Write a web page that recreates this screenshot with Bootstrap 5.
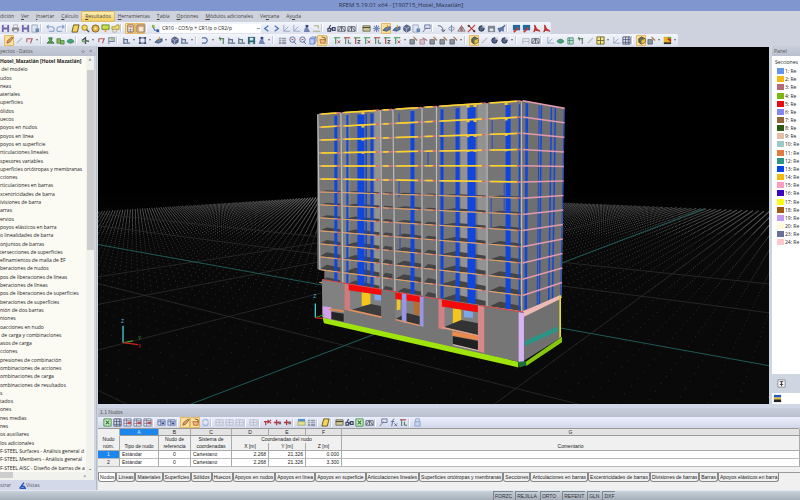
<!DOCTYPE html>
<html lang="es">
<head>
<meta charset="utf-8">
<meta name="viewport" content="width=device-width, initial-scale=1">
<title>RFEM 5.19.01 x64 - [190715_Hotel_Mazatlán]</title>
<link href="https://cdn.jsdelivr.net/npm/bootstrap@5.3.0/dist/css/bootstrap.min.css" rel="stylesheet">
<style>
:root{--ui:"Open Sans","Noto Sans",sans-serif;--grid-font:"Liberation Sans",Arial,sans-serif}
body{font:5px/8px var(--ui);color:#222;background:#cdd2de;overflow:hidden}
button,select{font:inherit;color:inherit;border:0;background:none;padding:0;margin:0}
.titlebar{height:11px;background:#8096cf;font-size:6px;line-height:11px;color:#2b3044;padding-left:2px}
.menubar{height:11px;background:#ced2dc}
.menubar a{color:#444;text-decoration:none;line-height:9px;padding:0 3px;margin-right:-1px;border:1px solid transparent;white-space:nowrap}
.menubar a:first-child{padding-left:0;margin-left:-1px}
.menubar a.current{background:linear-gradient(#fdeeb0,#f5cd62);border-color:#dcbc6a;border-radius:1px}
.strip{height:12px;background:linear-gradient(#f3f5fb,#dde1ed);border-radius:0 2px 2px 0;width:max-content}
.tool{width:10px;height:11px;display:flex;align-items:center;justify-content:center;border-radius:1px}
.tool svg{width:9px;height:9px;display:block}
.tool.lit{background:#fbdf9c;box-shadow:inset 0 0 0 1px #e3b866}
.drop{width:6px;height:11px;display:flex;align-items:center;justify-content:center;color:#555}
.drop::before{content:"";border:1px solid transparent;border-top:2px solid #666;border-bottom:0}
.gap-line{width:5px;height:8px;border-left:1px solid #c3c9d8;margin-left:0;background:linear-gradient(90deg,#fff 1px,transparent 1px)}
.cases{width:101px;height:9px;padding:0 2px;line-height:9px;appearance:none;border-radius:0;background:linear-gradient(#8f98ac,#8f98ac) 97px 4px/3px 1px no-repeat #fff}
.side{width:97px;border-right:1px solid #b4bdcb;background:#ced6e2}
.cap{height:10px;line-height:10px;background:linear-gradient(#c9cedb,#b9bfcd);color:#555;flex:none}
.treebox{background:#fbfaf3;margin-right:2px;overflow:hidden}
.tree{overflow:hidden;white-space:nowrap;margin:0;padding:1px 0 0}
.tree li{line-height:8px;flex:1 1 0;min-height:0}
.tree li:first-child{font-weight:700}
.vbar{width:8px;background:#f1f1ee;text-align:center;flex:none}
.vthumb{background:#cdcdcd;height:180px;width:7px;margin-top:6px}
.hbar{height:8px;background:#f1f1ee;margin-right:2px;flex:none}
.hthumb{width:13px;height:6px;background:#cdcdcd}
.foottabs{height:10px;color:#556;background:#d3d9e8;flex:none;line-height:9px}
.stage{background:#000;overflow:hidden;position:relative;min-width:0;margin:1px 0 0 1px}
.stage svg{width:100%;height:100%;display:block}
.legend-side{width:31px;flex:none;border-left:3px solid #ccd5e0;overflow:hidden;white-space:nowrap;background:#ced6e2}
.legend-side .cap{padding-left:2px}
.legend-box{background:#fff;overflow:hidden;padding-left:3px}
.legend-title{padding-top:2px;padding-bottom:1px}
.legend-list{flex:184 1 0;margin:0;padding:0 0 0 2px}
.legend-rest{flex:131 1 0}
.swatch{width:7px;height:6px;display:inline-block;flex:none;margin-right:1px}
.tables{height:86px;flex:none;background:#f0f0f0;border-top:4px solid #cfd8e4;margin-left:1px;font-family:var(--grid-font)}
.tables .cap{padding-left:2px;line-height:9px;height:9px}
.tables .strip{width:auto;height:12px;border-bottom:1px solid #999;padding-left:4px;background:linear-gradient(#eceffd,#d2d8ea)}
.tables .gap-line{width:4px}
.sheet{width:100%;table-layout:fixed;border-collapse:separate;border-spacing:0;white-space:nowrap}
.sheet th,.sheet td{padding:0 2px;line-height:8px;height:8px;border-right:1px solid #aaa;border-bottom:1px solid #bbb;overflow:hidden;font-weight:400}
.sheet th{text-align:center}
.sheet td{background:#fff;line-height:7px}
.sheet thead th{border-bottom:0;line-height:7px;height:7px;background:#f0f0f0}
.sheet thead .letters th{background:#e3e3e3;border-bottom:1px solid #999;line-height:6px}
.sheet thead tr:last-child th{border-bottom:1px solid #aaa}
.sheet thead .letters .picked,.sheet tbody .picked{background:#1b86ee;color:#dfeeff}
.sheet thead .letters .corner{background:#f0f0f0;border-bottom-color:#f0f0f0}
.sheet tbody th{line-height:7px;background:#ececec}
.sheettabs{border-top:1px solid #999;margin-top:5px;white-space:nowrap;overflow:hidden}
.sheettabs button{height:9px;line-height:8px;padding:0 1px;border:1px solid #888;border-top:0;border-radius:0 0 3px 3px;background:#f0f0f0;flex:none}
.sheettabs button.current{background:#fff}
.status{height:10px;flex:none;background:linear-gradient(#c9d2db,#a5afb9);border-top:1px solid #e4e9ef;font-family:var(--grid-font)}
.status span{border:1px solid #7b838c;border-width:1px 0 0 1px;margin-right:2px;padding:0 1px;line-height:8px;color:#333}
.status-lead{flex:497 1 0}
.status-rest{flex:184 1 0}
</style>
<script src="https://cdn.jsdelivr.net/npm/bootstrap@5.3.0/dist/js/bootstrap.bundle.min.js"></script>
</head>
<body class="vh-100 d-flex flex-column">
<header class="flex-shrink-0">
  <div class="titlebar text-center">RFEM 5.19.01 x64 - [190715_Hotel_Mazatlán]</div>
  <nav class="menubar d-flex align-items-center" aria-label="Menú">
    <a href="#">dición</a><a href="#"><u>V</u>er</a><a href="#"><u>I</u>nsertar</a><a href="#"><u>C</u>álculo</a><a href="#" class="current"><u>R</u>esultados</a><a href="#"><u>H</u>erramientas</a><a href="#"><u>T</u>abla</a><a href="#"><u>O</u>pciones</a><a href="#"><u>M</u>ódulos adicionales</a><a href="#">Ve<u>n</u>tana</a><a href="#">Ay<u>u</u>da</a>
  </nav>
  <div class="strip d-flex align-items-center" id="bar1" role="toolbar" aria-label="Estándar"></div>
  <div class="strip d-flex align-items-center" id="bar2" role="toolbar" aria-label="Vista"></div>
</header>

<main class="d-flex flex-fill overflow-hidden">
  <aside class="side d-flex flex-column flex-shrink-0">
    <div class="cap d-flex"><span class="flex-fill">yectos - Datos</span><span class="pe-1">⊹</span><span class="pe-1">×</span></div>
    <div class="treebox d-flex flex-fill">
      <ul class="tree list-unstyled d-flex flex-column flex-fill" id="tree"></ul>
      <div class="vbar d-flex flex-column align-items-center"><span>^</span><div class="vthumb"></div><span class="mt-auto">⌄</span></div>
    </div>
    <div class="hbar d-flex justify-content-between"><div class="hthumb"></div><span class="pe-2">&gt;</span></div>
    <div class="foottabs d-flex align-items-center"><button type="button">strar</button><button type="button" class="d-flex align-items-center ms-2"><svg width="7" height="7" viewBox="0 0 10 10" aria-hidden="true"><path d="M1 9L7 1M3 6h4L9 9H1" fill="none" stroke="#2754c0" stroke-width="2"/></svg>Vistas</button></div>
  </aside>

  <div class="d-flex flex-column flex-fill overflow-hidden">
    <div class="d-flex flex-fill overflow-hidden">
      <section class="stage flex-fill" aria-label="Modelo 3D">
        <svg viewBox="99 47 670 358" preserveAspectRatio="xMidYMid slice" role="img" aria-label="Hotel Mazatlán">
          <defs><linearGradient id="ground" x1="0" y1="0" x2="0" y2="1"><stop offset=".4" stop-color="#000"/><stop offset=".55" stop-color="#090909"/></linearGradient></defs>
          <rect x="99" y="47" width="670" height="358" fill="url(#ground)"/>
          <g id="floor"></g>
          <g id="tower"></g>
          <g id="podium" transform="translate(310 230) scale(.33333)"></g>
          <g fill="none" stroke-width="1">
            <path d="M124 343V326M316 318v-14" stroke="#3fd0d8" stroke-width="1.3"/>
            <path d="M124 343l10-2M316 318l9-3" stroke="#38c020"/>
            <path d="M124 343l15 2M316 318l7 1" stroke="#d02020" stroke-width="1.4"/>
          </g>
          <g font-family="Liberation Sans, sans-serif" font-size="5"><text x="122" y="323" fill="#5ad">Z</text><text x="314" y="298" fill="#5ad">Z</text><text x="139" y="340" fill="#3a3">Y</text><text x="139" y="348" fill="#b22">X</text></g>
        </svg>
      </section>
      <aside class="legend-side d-flex flex-column">
        <div class="cap">Panel</div>
        <div class="legend-box d-flex flex-column flex-fill">
          <div class="legend-title">Secciones</div>
          <ul class="legend-list list-unstyled d-flex flex-column" id="legend"></ul>
          <div class="legend-rest"></div>
        </div>
        <div class="d-flex px-1 py-1"><button type="button" class="tool" aria-label="Opciones del panel"><svg viewBox="0 0 10 10"><path d="M1 1h8v8H1z" fill="#fff" stroke="#888"/><path d="M3 3h4M5 3v5M3 6h4" stroke="#333" fill="none"/></svg></button></div>
        <div class="d-flex bg-white"><button type="button" class="tool" aria-label="Leyenda"><svg viewBox="0 0 10 10"><path d="M1 1h8v3H1z" fill="#2354c8"/><path d="M1 4h8v2H1z" fill="#e8c820"/><path d="M1 6h8v3H1z" fill="#222"/></svg></button></div>
      </aside>
    </div>

    <section class="tables" aria-label="Tablas">
      <div class="cap">1.1 Nudos</div>
      <div class="strip d-flex align-items-center" id="bar3" role="toolbar" aria-label="Tabla"></div>
      <table class="sheet">
        <colgroup><col style="width:22px"><col style="width:39px"><col style="width:32px"><col style="width:41px"><col style="width:37px"><col style="width:37px"><col style="width:36px"><col></colgroup>
        <thead>
          <tr class="letters"><th class="corner"></th><th class="picked">A</th><th>B</th><th>C</th><th>D</th><th>E</th><th>F</th><th>G</th></tr>
          <tr><th>Nudo</th><th></th><th>Nudo de</th><th>Sistema de</th><th colspan="3">Coordenadas del nudo</th><th></th></tr>
          <tr><th>núm.</th><th>Tipo de nudo</th><th>referencia</th><th>coordenadas</th><th>X [m]</th><th>Y [m]</th><th>Z [m]</th><th>Comentario</th></tr>
        </thead>
        <tbody>
          <tr><th class="picked">1</th><td>Estándar</td><td class="text-center">0</td><td>Cartesiano</td><td class="text-end">2.268</td><td class="text-end">21.326</td><td class="text-end">0.000</td><td></td></tr>
          <tr><th>2</th><td>Estándar</td><td class="text-center">0</td><td>Cartesiano</td><td class="text-end">2.268</td><td class="text-end">21.326</td><td class="text-end">3.300</td><td></td></tr>
        </tbody>
      </table>
      <div class="sheettabs d-flex" id="tabs" role="tablist"></div>
    </section>
  </div>
</main>

<footer class="status d-flex"><div class="status-lead"></div><span>FORZC</span><span>REJILLA</span><span class="pe-1">ORTO</span><span>REFENT</span><span>GLN</span><span>DXF</span><div class="status-rest"></div></footer>

<script>
// Glyphs, each on a 10 x 10 field
const p=(d,f,s,w)=>`<path d="${d}" fill="${f||'none'}"${s?` stroke="${s}" stroke-width="${w||1}"`:''}/>`;
const glyphs={
 save:p('M1 1h8v8H1z','#6e6aa8')+p('M3 1h4v3H3zM3 6h4v3H3z','#e8e8f4'),
 print:p('M1 4h8v4H1z','#8a8a94')+p('M3 1h4v3H3zM3 6h4v3H3z','#fff','#777',.6),
 find:p('M1 1h6v8H1z','#dde6f2','#8391a8',.7)+p('M5 5h4v4H5z','#6a87b0'),
 undo:p('M3 1L1 3l2 2M1 3h5q3 0 3 3t-3 2H3','', '#8aa0c8',1.2),
 redo:p('M7 1l2 2-2 2M9 3H4Q1 3 1 6t3 2h3','', '#8aa0c8',1.2),
 para:p('M3 1h6L7 9H1z','#f4d558','#66511a',1),
 loupe:p('M1 4a3 3 0 1 1 6 0a3 3 0 1 1-6 0','#f8dc50','#96792a',1)+p('M6 6l3 3','', '#555',1.5),
 gear:p('M5 1l3 1 1 3-1 3-3 1-3-1-1-3 1-3z','#e6b444','#80591a',1)+p('M4 4h2v2H4z','#fff'),
 screen:p('M1 1h8v5H1z','#c9de48','#5d8a30',1)+p('M4 6h2v3H4z','#e0a830'),
 folder:p('M1 3h4l1-2h3v5H1z','#f2dc62','#9c8730',.8)+p('M2 6h4v3H2z','#f6f0d0','#887',.6),
 calc:p('M2 1h6v8H2z','#fff','#8a5a3a',1)+p('M3 2h4v2H3z','#d48a5c')+p('M3 6h4M3 8h4M5 5v4','', '#777',.7),
 win:p('M1 1h8v8H1z','#fbe9cd','#8a6a58',1)+p('M1 1h8v2H1zM1 3h2v6H1z','#c79a70'),
 nodes:p('M2 2l2 5h4','', '#3c79a8',1.2)+p('M1 1h3v3H1z','#88b840')+p('M6 6h3v3H6z','#38609c'),
 lt:p('M7 2L3 5l4 3','', '#4a78b8',1.5), rt:p('M3 2l4 3-4 3','', '#4a78b8',1.5),
 axes:p('M2 1v7h7M2 8l5-5','', '#96a4c4',1),
 blue:p('M2 9l1-4 2-1 2 1 2 4z','#7184b4')+p('M4 1h3v3H4z','#2f477f'),
 bars:p('M1 8h8M2 2h5v3','', '#a9b184',1.2),
 glass:p('M1 5h3v3H1zM6 4h3v3H6zM4 6l2-1M2 5l2-4','', '#3c4564',1.3),
 truss:p('M1 3h8M1 8h8M1 3v5M5 3v5M9 3v5M1 8l4-5 4 5','', '#555d68',1),
 rows:p('M1 2h8v7H1z','#8f98aa')+p('M1 4h8M1 6h8M4 2v7','', '#fff',.6),
 panelG:p('M1 2h8v6H1z','#d4c890','#66705c',1)+p('M1 4h8','', '#333',1),
 star:p('M5 1v8M1 5h8M2 2l6 6M8 2L2 8','', '#7086b8',1.2),
 beam:p('M1 7l3-3 5-1v3L5 8z','#5d7ea8','#344a6c',.8)+p('M6 1v4','', '#d09020',1),
 boxd:p('M2 3l3-2 4 2v4L5 9 2 7z','#5f6c96','#343a54',.8)+p('M2 3l3 2 4-2M5 5v4','', '#c6cbe0',.7),
 find2:p('M3 1h6v4H3zM1 9l4-5','#dbe0f0','#6a739a',1),
 curve:p('M1 2q5-1 6 6M5 6l2 3 2-3','', '#5e6880',1.1),
 turn:p('M2 5a3 2 0 1 1 6 0a3 2 0 1 1-6 0M5 1v8','', '#7d88a4',1),
 mirror:p('M1 8l3-5v5zM9 8L6 3v5z','#ced3e2','#765a5a',.8)+p('M5 1v8','', '#a33',.7),
 cut:p('M1 1l8 8M9 1L1 9','', '#c23c34',1.3)+p('M1 1h2v2H1zM7 7h2v2H7z','#333'),
 ball:p('M2 5a3 3 0 1 1 6 0a3 3 0 1 1-6 0','#55658a','#232a3e',1)+p('M6 1h3v3H6z','#d8dbe6'),
 cam:p('M1 2h8v7H1z','#7c8694')+p('M3 5h4v3H3z','#dfe5ec'),
 fan:p('M1 5l4-1 4-3-2 4 0 3-2-1-2 2z','#5a7ebd','#3a4d7a',.7),
 pdf:p('M1 1h8v6H1z','#1d6b9c')+p('M2 9l5-5','', '#c8383c',2),
 red:p('M3 1l2 4 4 3-5-1-2 2 1-4z','#d63434','#a31c1c',.8),
 pen:p('M2 8l1-3 5-4 1 1-4 5z','#e99b5a','#79513a',.8),
 line:p('M2 8l6-6','', '#b5b9c4',1.2),
 hook:p('M2 3h6l-2 5M2 3v4','', '#b2565c',1.2),
 green:p('M1 8l3-3-1-3h4l-1 3 3 3z','#55a04a','#2d6a3c',.8),
 green2:p('M1 3h4v5H1zM5 5h4v4H5z','#8db84a','#3f7f54',.8),
 leaf:p('M1 6q4-5 8 0-4 4-8 0z','#46a47a','#257050',.8),
 bird:p('M1 5l4-3v3l4 1M5 5v4','', '#39484c',1.4)+p('M1 5h4v2H1z','#6aa860'),
 flag:p('M2 9V2h6v4H2','', '#6c80a6',1.2)+p('M4 2h3v3H4z','#aac66c'),
 frame:p('M2 2h6v6H2z','', '#5e6e92',1.4)+p('M1 1h2v2H1zM7 1h2v2H7zM1 7h2v2H1zM7 7h2v2H7z','#3c465f'),
 load:p('M1 8h8M2 2v6M2 4h4v3','', '#607492',1.3),
 dim:p('M1 2h4M1 8h4M5 2q4 3 0 6','', '#51719f',1.3),
 tee:p('M2 3h6M7 3v6M3 1l1 4','', '#5d8464',1.3),
 disk:p('M1 1h8v8H1z','#2f6276')+p('M3 2h4v3H3zM3 7h4v2H3z','#d2e6e8'),
 zoom:p('M2 4a3 3 0 1 1 6 0a3 3 0 1 1-6 0M6 6l3 3','#dfe9fb','#5b6794',1)+p('M4 4h2','', '#a33',1),
 cube:p('M2 3l2-2h5v5L7 9H2z','#bfd0f4','#5671bd',.8)+p('M2 3h5v6M7 3l2-2','', '#5671bd',.8),
 hand:p('M2 4h6v4H3z','#f0b878','#a06030',.8)+p('M4 1l4 1v3','', '#805028',1),
 vx:p('M1 2h7M3 2v7','', '#3d9450',1.2)+p('M5 5l3 3M8 5L5 8','', '#b53c3c',1),
 vy:p('M1 2h7','', '#b53c3c',1.2)+p('M3 2v7M6 4v4h3','', '#3d6c50',1),
 vz:p('M1 2h7','', '#3d9450',1.2)+p('M3 2v7','', '#b53c3c',1.2)+p('M5 5h3L5 8h3','', '#444',1),
 layers:p('M1 4h5v5H1z','#8c949c','#454a55',.7)+p('M5 1l4 4','', '#a87040',1.2),
 layersP:p('M1 4h5v5H1z','#dac0c8','#9a6a74',.7)+p('M4 2l5 3','', '#a87080',1.2),
 wire:p('M2 9V3h7v6M2 6h7','', '#aab0bd',1),
 cubeG:p('M2 2h6v7H2z','#bfe0d0','#3d8068',.8)+p('M4 2v7M2 5h6','', '#3d8068',.8),
 grid:p('M1 1h8v8H1z','#e5e8f3','#4b5372',1)+p('M1 4h8M1 7h8M4 1v8M7 1v8','', '#4b5372',.9),
 gridY:p('M1 1h8v8H1z','#f2e48c','#716a28',1)+p('M1 5h8M5 1v8','', '#716a28',1),
 solid:p('M2 3l3-2 4 2v4L5 9 2 7z','#6e6e50','#3a3a2a',.9)+p('M5 5l4-2v4L5 9z','#e2bf48'),
 palette:p('M1 1h8v8H1z','#62a838')+p('M1 1h4l4 8H1z','#e8b020')+p('M4 3h5v4z','#c42a20')+p('M1 7h8v2H1z','#363636'),
 excel:p('M1 1h8v8H1z','#d9efd2','#3b8b3c',1)+p('M3 3l4 4M7 3L3 7','', '#2b7a2e',1.3),
 tableR:p('M1 1h8v8H1z','#edf0f8','#66708c',.9)+p('M1 3h8M4 1v8M1 6h8','', '#66708c',.8)+p('M5 4h4v3H5z','#c05058'),
 tableB:p('M1 2h8v6H1z','#d4ddf2','#5f6fa0',.9)+p('M1 4h8M4 2v6','', '#5f6fa0',.8)+p('M5 5h3v2H5z','#38508c'),
 faint:p('M1 2h8v6H1z','#e0e4ef','#afb8cb',.9)+p('M1 5h8M5 2v6','', '#afb8cb',.8),
 del:p('M1 4h5M5 2l4 4M9 2L5 6M3 4v4','', '#b3383c',1.3),
 ins:p('M1 5h7M4 2v6','', '#b3383c',1.4)+p('M6 4h3v3H6z','#7d6870'),
 stripes:p('M1 1h8v3H1z','#5a92c8')+p('M1 4h8v4H1z','#e6e288','#8a9a60',.7),
 fx:p('M6 1q-2 0-2 3L3 9M2 4h4M6 6l3 3M9 6L6 9','', '#56689a',1),
 rerun:p('M2 5a3 3 0 0 1 6-1M8 5a3 3 0 0 1-6 1','', '#9db6d8',1.3),
 lock:p('M2 4h6v5H2z','#c2d2ee','#8298c4',.8)+p('M3 4V1h4v3','', '#8298c4',1)
};
// "|" is a divider, "v" a drop-down arrow, "*" marks a pressed button, "=" the load case list
const bars={
 bar1:'save print save find | undo redo | para loupe gear screen folder | calc* win* | nodes = lt rt axes axes blue bars | glass truss truss | panelG star beam* beam boxd find find2 | curve turn mirror cut ball cam fan | pdf pdf red red',
 bar2:'pen* line hook v | green green2 leaf | bird v hook flag | load v frame v beam v boxd load v | dim v tee load load disk blue v | rows zoom zoom cube hand* | vx vy vz vx vy vz vx v layers layersP layers layers layers v | solid* line ball ball v | wire truss | axes leaf cubeG tee line gridY v axes grid | solid* layers v palette v',
 bar3:'excel grid tableR tableR tableR | tableB tableB | pen* hand* rerun | faint faint faint | faint | del ins ins | stripes rows | para | panelG glass excel truss | find2 fx vy | lock'
};
for(const [id,list] of Object.entries(bars)){
 document.getElementById(id).innerHTML=(id==='bar2'?'<span class="ps-1"></span>':'')+list.split(' ').map(t=>{
  if(t==='|')return '<span class="gap-line"></span>';
  if(t==='v')return '<button type="button" class="drop" aria-label="Más"></button>';
  if(t==='=')return '<select class="cases" aria-label="Caso de carga"><option>CR10 - CO5/p + CR1/p o CR2/p</option></select>';
  const n=t.replace('*','');
  return `<button type="button" class="tool${n!==t?' lit':''}" aria-label="${n}"><svg viewBox="0 0 10 10">${glyphs[n]}</svg></button>`;
 }).join('');
}
document.getElementById('tree').innerHTML=`Hotel_Mazatlán [Hotel Mazatlán]|&nbsp;del modelo|udos|neas|ateriales|uperficies|ólidos|uecos|poyos en nudos|poyos en línea|poyos en superficie|rticulaciones lineales|spesores variables|uperficies ortótropas y membranas|cciones|rticulaciones en barras|xcentricidades de barra|ivisiones de barra|arras|ervios|poyos elásticos en barra|o linealidades de barra|onjuntos de barras|tersecciones de superficies|efinamientos de malla de EF|beraciones de nudos|pos de liberaciones de líneas|beraciones de líneas|pos de liberaciones de superficies|beraciones de superficies|nión de dos barras|niones|oacciones en nudo|&nbsp;de carga y combinaciones|asos de carga|cciones|presiones de combinación|ombinaciones de acciones|ombinaciones de carga|ombinaciones de resultados|s|tados|ones|nes medias|nes|os auxiliares|los adicionales|F-STEEL Surfaces - Análisis general d|F-STEEL Members - Análisis general|F-STEEL AISC - Diseño de barras de a`.split('|').map(t=>`<li>${t}</li>`).join('');
document.getElementById('legend').innerHTML='1#6495ed 2#f5b90f 3#b46a78 4#7fb50e 5#e80b14 6#8585f8 7#94683a 8#2d5a12 9#e8bfa6 10#9ccac6 11#e27b42 12#2e9688 13#0a46f0 14#f5b90f 15#fd9dc0 16#3a04c4 17#ffff10 18#a05a14 19#c49af6 20#fffadc 23#68709c 24#fdc8cc'.split(' ').map(t=>{const [n,c]=t.split('#');return `<li class="d-flex align-items-center flex-fill"><span class="swatch" style="background:#${c}"></span>${n}: Re</li>`}).join('');
document.getElementById('tabs').innerHTML='Nudos|Líneas|Materiales|Superficies|Sólidos|Huecos|Apoyos en nudos|Apoyos en línea|Apoyos en superficie|Articulaciones lineales|Superficies ortótropas y membranas|Secciones|Articulaciones en barras|Excentricidades de barras|Divisiones de barras|Barras|Apoyos elásticos en barra'.split('|').map((t,i)=>`<button type="button" role="tab"${i?'':' class="current"'}>${t}</button>`).join('');

// Ground grid in two-point perspective
const at=(u,v)=>{const a=u*.0148,b=v*.0222,w=1+a+b;return w>.08?[(451-380*a+820*b)/w,(306+164*a+166*b)/w]:null};
const inView=q=>q&&q[0]>98&&q[0]<770&&q[1]<406;
const dots=['','',''];
for(let u=-60;u<=100;u++)for(let v=-42;v<=100;v++){const q=at(u,v);if(inView(q))dots[q[1]>290?0:q[1]>235?1:2]+=`M${q[0].toFixed(1)} ${q[1].toFixed(1)}h.8`}
const seg=(a,b,c,w)=>`<path d="M${a}L${b}" stroke="${c}" stroke-width="${w}"/>`;
let ground=dots.map((d,i)=>`<path d="${d}" stroke="${['#3a3a3a','#4c4c4c','#777'][i]}" stroke-width=".8"/>`).join('');
for(const u of [-10,10,20,30])ground+=seg(at(u,-30),at(u,100),'#2c2c2c',.8);
for(const v of [-20,-10,10,20])ground+=seg(at(-20,v),at(100,v),'#2c2c2c',.8);
ground+=seg([99,245],[769,366],'#1d5a56',1)+seg([190,405],[705,209],'#1d5a56',1);
document.getElementById('floor').innerHTML=ground;

// Tower: 13 storeys between two raked edges
const poly=(pts,f)=>`<polygon points="${pts}" fill="${f}"/>`;
const front=(x,i)=>{const t=(x-318)/205;return (115+12.9*i)*(1-t)+(101.5+16.2*i)*t};
const flank=(x,i)=>{const t=(x-523)/42;return (101.5+16.2*i)*(1-t)+(109+14.5*i)*t};
const strip=(y,a,b,i,j,f)=>poly(`${a},${y(a,i)} ${b},${y(b,i)} ${b},${y(b,j)} ${a},${y(a,j)}`,f);
let t=strip(front,318,523,0,12,'#757575')+strip(front,325,522,11.8,13.1,'#757575');
t+=poly('523,101 565,109 562,298 521,314','#6f6f6f');
[[375,380.5],[461,468],[478,487]].forEach(([a,b])=>t+=strip(front,a,b,0,13,'#929292'));
[[342,351],[359,364],[411,415]].forEach(([a,b])=>t+=strip(front,a,b,0,13,'#808080'));
const bays=[[320,341],[343,380],[382,393],[395,422],[424,437],[439,486],[489,521]];
for(let i=6;i<=13;i++)bays.forEach(([a,b])=>{const h=1+(i-5)*.55;t+=poly(`${a},${front(a,i)} ${a+(b-a)*.35},${front(a,i)-h} ${b},${front(b,i)-h} ${b},${front(b,i)}`,'#444')});
const blue='#1046dc';
[[335,338],[347,349],[358,365],[366,367.5],[371,374],[411,415],[441,444],[456,460],[468,476],[506,511],[519,520.5]].forEach(([a,b])=>t+=strip(front,a,b,.2,13,blue));
[[526,528.5],[539,540],[541,542.5],[551,552.5],[555,556.5],[564,565]].forEach(([a,b])=>{const s=(a-523)/42;t+=poly(`${a},${flank(a,.1)} ${b},${flank(b,.1)} ${b-s*2.6-1},${flank(b,13)} ${a-s*2.6-1},${flank(a,13)}`,blue)});
[[399,.3,1],[399,5,6.2],[428,3,4],[492,1,3],[491,6,8],[504,5,7],[400,8,10]].forEach(([x,i,j])=>t+=strip(front,x,x+1.2,i,j,'#3450c0'));
for(let i=0;i<=13;i++){
 const hot=i<6;
 bays.forEach(([a,b])=>{
  t+=seg([a,front(a,i)],[b,front(b,i)],'#e0a090',hot?1.5:1);
  t+=seg([a+2,front(a+2,i)],[b-4,front(b-4,i)],hot?'#f8d626':'#d6a25c',hot?1.5:.8);
  t+=seg([b-3,front(b-3,i)],[b-1,front(b-1,i)],'#d8484c',1.2);
 });
 if(i<4)[362,467,474,505].forEach(x=>t+=`<rect x="${x}" y="${front(x,i)}" width="3" height="${3-i*.5}" fill="#f0c63a"/>`);
 t+=seg([523,flank(523,i)],[565-i*.22,flank(565,i)],'#e49aae',1.5);
}
[[318.5,12],[341.5,13],[381,13],[393.5,13],[422.5,13.2],[437,13.2],[487.5,13.2],[522,13]].forEach(([x,j])=>t+=seg([x,front(x,0)],[x+(x<400?2:0),front(x,j)],'#bcbcbc',1.2));
document.getElementById('tower').innerHTML=t;

// Podium, drawn on a field three times finer
document.getElementById('podium').innerHTML=[
 ['38,150 635,246 635,398 40,268','#767676'],['38,150 105,160 105,275 40,262','#818181'],
 ['642,250 752,198 752,325 642,394','#707070'],['642,245 750,197 750,209 642,262','#efb9b4'],['645,335 745,290 745,305 645,350','#2b9486'],['749,197 754,197 754,322 749,325','#e3dc34'],
 ['105,162 122,165 122,244 105,240','#cc7c7c'],['122,183 215,196 215,262 122,241','#7e8082'],['157,188 183,192 183,226 157,229','#f4c51c'],['195,194 215,197 215,213 195,212','#7ea6e8'],['124,241 184,223 215,229 215,262','#3c3c3c'],['118,163 216,179 216,196 118,182','#f30a0a'],['120,238 216,260 216,265 120,243','#e59063'],
 ['40,230 66,233 66,270 40,262','#d2a0ee'],['60,236 103,242 103,248 60,242','#dc8a50'],['66,246 103,252 103,276 66,268','#242424'],
 ['258,205 334,217 334,288 258,268','#808080'],['262,208 273,210 273,240 262,242','#efc52a'],['313,216 331,219 331,258 313,253','#b46e30'],['260,267 292,250 331,260 331,286','#343434'],['258,189 332,201 332,218 258,208','#f30a0a'],['277,190 291,192 291,280 277,277','#9896e4'],['331,200 342,202 342,292 331,289','#9896e4'],['258,268 330,285 330,290 258,272','#e59063'],
 ['397,228 506,247 506,320 397,297','#7e8082'],['430,236 455,240 455,277 430,281','#f4c51c'],['463,242 490,247 490,265 463,263','#7ea6e8'],['402,293 455,271 506,281 506,317','#333'],['387,208 405,211 405,300 387,296','#d28082'],['397,210 506,228 506,248 397,231','#f30a0a'],['400,291 506,316 506,321 400,296','#e5a084'],
 ['428,305 506,320 506,332 428,318','#ea8a4c'],['430,320 506,334 506,364 430,346','#202020'],['430,343 506,361 506,365 430,347','#d9c0c0'],['505,228 524,231 524,370 505,365','#d88888'],
 ['627,248 643,250 643,398 627,397','#d9b4f2'],
 ['40,264 626,396 626,413 44,281','#9fe40c'],['648,396 757,321 757,338 650,409','#86c60c'],['624,397 648,394 650,407 630,413','#1d7038']
].map(([a,f])=>poly(a,f)).join('')+'<path d="M38 150L218 180M230 182L340 201M345 203L400 209M510 228L638 247" fill="none" stroke="#d84848" stroke-width="3"/>';
</script>
</body>
</html>
